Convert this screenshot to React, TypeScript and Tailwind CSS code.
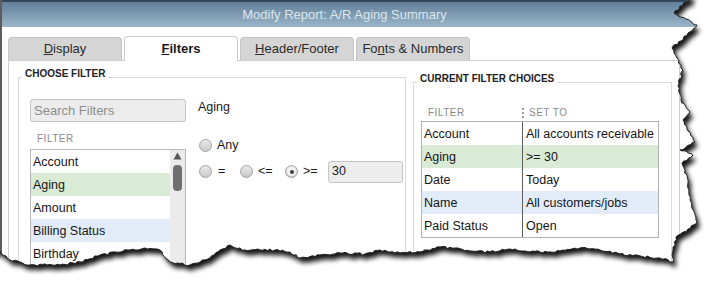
import React from "react";

function rng(seed: number) {
  let s = seed;
  return () => {
    s = (s * 16807) % 2147483647;
    return (s - 1) / 2147483646;
  };
}

const RIGHT: [number, number][] = [
  [690, 0], [680, 6], [674, 13], [686, 19], [697, 25], [688, 33], [681, 41], [672, 48], [677, 58],
  [683, 70], [678, 86], [681, 100], [690, 112], [683, 120], [688, 131], [695, 142], [680, 150],
  [693, 155], [682, 163], [688, 180], [690, 200], [697, 222], [688, 229], [676, 237], [673, 250], [673, 262],
];
const BOTTOM: [number, number][] = [
  [660, 258], [640, 256], [620, 254], [600, 250], [580, 248], [560, 251], [540, 252], [510, 249],
  [490, 252], [470, 251], [455, 248], [440, 247], [420, 252], [400, 253], [380, 250], [365, 254],
  [340, 253], [320, 255], [300, 258], [290, 252], [275, 250], [245, 250], [230, 245], [220, 250],
  [210, 258], [190, 265], [170, 262], [160, 250], [145, 248], [130, 250], [100, 255], [80, 262],
  [60, 265], [30, 265], [10, 260], [0, 251],
];

function buildInner() {
  const r = rng(12345);
  const pts: [number, number][] = [[-6, -6], [692, -6]];
  const all = [...RIGHT, ...BOTTOM];
  for (let i = 0; i < all.length - 1; i++) {
    const [x1, y1] = all[i];
    const [x2, y2] = all[i + 1];
    const len = Math.hypot(x2 - x1, y2 - y1);
    const n = Math.max(1, Math.round(len / 2.5));
    const nx = -(y2 - y1) / len;
    const ny = (x2 - x1) / len;
    for (let k = 0; k < n; k++) {
      const t = k / n;
      const j = k === 0 ? 0 : (r() - 0.5) * 2.2;
      pts.push([x1 + (x2 - x1) * t + nx * j, y1 + (y2 - y1) * t + ny * j]);
    }
  }
  pts.push(all[all.length - 1]);
  pts.push([-6, 252]);
  return "M" + pts.map(([x, y]) => `${x.toFixed(1)} ${y.toFixed(1)}`).join(" L") + " Z";
}

const INNER = buildInner();
const OUTSIDE = "M-20 -20 H740 V310 H-20 Z " + INNER;

function Radio({ checked }: { checked?: boolean }) {
  return (
    <span className="w-[13px] h-[13px] rounded-full border border-[#a3a3a3] bg-gradient-to-b from-[#e9e9e9] to-[#c9c9c9] flex items-center justify-center shrink-0">
      {checked && (
        <span className="w-[9px] h-[9px] rounded-full bg-[#f2f2f2] flex items-center justify-center">
          <span className="w-[4px] h-[4px] rounded-full bg-[#3c3c3c]" />
        </span>
      )}
    </span>
  );
}

function Tab({ children, active }: { children: React.ReactNode; active?: boolean }) {
  if (active)
    return (
      <div className="relative z-10 w-[114px] h-[25px] -mb-px bg-white border border-b-0 border-[#c9c9c9] rounded-t-[4px] flex items-center justify-center text-[13px] font-bold text-[#1a1a1a]">
        {children}
      </div>
    );
  return (
    <div className="mt-[1px] w-[114px] h-[23px] bg-[#d5d5d5] border border-b-0 border-[#c4c4c4] rounded-t-[4px] flex items-center justify-center text-[13px] text-[#2a2a2a]">
      {children}
    </div>
  );
}

export default function App() {
  const listRows = [
    { t: "Account", c: "" },
    { t: "Aging", c: "bg-[#d9ebd5]" },
    { t: "Amount", c: "" },
    { t: "Billing Status", c: "bg-[#e2ecf8]" },
    { t: "Birthday", c: "" },
    { t: "Class", c: "" },
  ];
  const tableRows = [
    { a: "Account", b: "All accounts receivable", c: "" },
    { a: "Aging", b: ">= 30", c: "bg-[#d9ebd5]" },
    { a: "Date", b: "Today", c: "" },
    { a: "Name", b: "All customers/jobs", c: "bg-[#e2ecf8]" },
    { a: "Paid Status", b: "Open", c: "" },
  ];
  return (
    <div className="relative w-[719px] h-[290px] overflow-hidden bg-white font-['Liberation_Sans',Arial,sans-serif]">
      <div className="w-[705px] h-[290px] border-l-2 border-[#5c5c5c]">
        <div className="h-[27px] border-t-2 border-[#34475a] bg-gradient-to-b from-[#62809a] to-[#9bb6c9] flex items-center justify-center pr-[18px] text-[13px] text-[#dbe6ee]">
          Modify Report: A/R Aging Summary
        </div>
        <div className="pl-[6px] pt-[9px]">
          <div className="flex items-start gap-[2px]">
            <Tab><span><span className="underline">D</span>isplay</span></Tab>
            <Tab active><span><span className="underline">F</span>ilters</span></Tab>
            <Tab><span><span className="underline">H</span>eader/Footer</span></Tab>
            <Tab><span>Fo<span className="underline">n</span>ts &amp; Numbers</span></Tab>
          </div>
          <div className="w-[672px] h-[240px] border border-[#d0d0d0] pl-[9px] pt-[16px] flex items-start">
            {/* Left group */}
            <div className="relative w-[388px] h-[260px] border border-[#d9d9d9] pl-[11px] pt-[21px] flex gap-[12px]">
              <span className="absolute top-[-9px] left-[3px] bg-white px-[3px] text-[10px] leading-[10px] font-bold text-[#222]">
                CHOOSE FILTER
              </span>
              <div className="w-[156px] flex flex-col">
                <div className="h-[23px] border border-[#c6c6c6] rounded-[3px] bg-[#ececec] flex items-center pl-[3px] text-[13px] text-[#8c8c8c] whitespace-nowrap">
                  Search Filters
                </div>
                <div className="h-[27px] flex items-end pb-[5px] pl-[7px] text-[10px] leading-[11px] tracking-[0.5px] text-[#8a8a8a]">
                  FILTER
                </div>
                <div className="h-[150px] border border-[#b8b8b8] flex">
                  <div className="w-[139px] flex flex-col">
                    {listRows.map((r) => (
                      <div key={r.t} className={`h-[23px] shrink-0 flex items-center pl-[2px] pt-[1px] text-[12.5px] text-[#151515] whitespace-nowrap ${r.c}`}>
                        {r.t}
                      </div>
                    ))}
                  </div>
                  <div className="w-[15px] bg-[#ebebeb] flex flex-col items-center pt-[2px]">
                    <svg width="9" height="8" viewBox="0 0 9 8">
                      <path d="M4.5 0.5 L8.5 7.5 L0.5 7.5 Z" fill="#555" />
                    </svg>
                    <div className="mt-[5px] w-[9px] h-[26px] rounded-[4px] bg-[#6f6f6f]" />
                  </div>
                </div>
              </div>
              <div className="flex flex-col">
                <div className="h-[16px] leading-[16px] text-[12.5px] text-[#1a1a1a]">Aging</div>
                <div className="mt-[20px] h-[20px] flex items-center pl-[1px]">
                  <Radio />
                  <span className="ml-[5px] text-[12.5px] text-[#1a1a1a]">Any</span>
                </div>
                <div className="mt-[5px] h-[23px] flex items-center pl-[1px]">
                  <div className="w-[41px] flex items-center">
                    <Radio />
                    <span className="ml-[6px] text-[12.5px] text-[#1a1a1a]">=</span>
                  </div>
                  <div className="w-[45px] flex items-center">
                    <Radio />
                    <span className="ml-[5px] text-[12.5px] text-[#1a1a1a]">&lt;=</span>
                  </div>
                  <div className="w-[43px] flex items-center">
                    <Radio checked />
                    <span className="ml-[5px] text-[12.5px] text-[#1a1a1a]">&gt;=</span>
                  </div>
                  <div className="w-[75px] h-[22px] border border-[#c6c6c6] rounded-[3px] bg-[#ececec] flex items-center pl-[3px] text-[12.5px] text-[#1a1a1a]">
                    30
                  </div>
                </div>
              </div>
            </div>
            {/* Right group */}
            <div className="relative ml-[7px] mt-[5px] w-[259px] h-[200px] border border-[#d9d9d9] pl-[7px] pt-[21px]">
              <span className="absolute top-[-9px] left-[3px] bg-white px-[3px] text-[10px] leading-[10px] font-bold text-[#222] whitespace-nowrap">
                CURRENT FILTER CHOICES
              </span>
              <div className="h-[17px] flex items-center text-[10px] leading-[11px] tracking-[0.5px] text-[#8a8a8a]">
                <span className="w-[101px] pl-[7px]">FILTER</span>
                <span className="h-[10px] border-l-2 border-dotted border-[#9a9a9a] mr-[5px]" />
                <span>SET TO</span>
              </div>
              <div className="w-[238px] border border-[#b3b3b3]">
                {tableRows.map((r) => (
                  <div key={r.a} className={`h-[23px] flex text-[12.5px] text-[#151515] whitespace-nowrap ${r.c}`}>
                    <div className="w-[101px] shrink-0 border-r border-[#5e5e5e] flex items-center pl-[2px] pt-[1px]">{r.a}</div>
                    <div className="flex-1 flex items-center pl-[3px] pt-[1px] overflow-hidden">{r.b}</div>
                  </div>
                ))}
              </div>
            </div>
          </div>
        </div>
      </div>
      <svg className="absolute inset-0 pointer-events-none" width="719" height="290" viewBox="0 0 719 290">
        <defs>
          <clipPath id="outside">
            <path d={OUTSIDE} clipRule="evenodd" />
          </clipPath>
          <filter id="blur" x="-10%" y="-10%" width="120%" height="120%">
            <feGaussianBlur stdDeviation="2.6" />
          </filter>
        </defs>
        <path d={OUTSIDE} fill="#fff" fillRule="evenodd" />
        <g clipPath="url(#outside)">
          <path d={INNER} transform="translate(3 5)" fill="#000" opacity="0.92" filter="url(#blur)" />
        </g>
        <path d={INNER} fill="none" stroke="#222" strokeWidth="1" />
      </svg>
    </div>
  );
}
